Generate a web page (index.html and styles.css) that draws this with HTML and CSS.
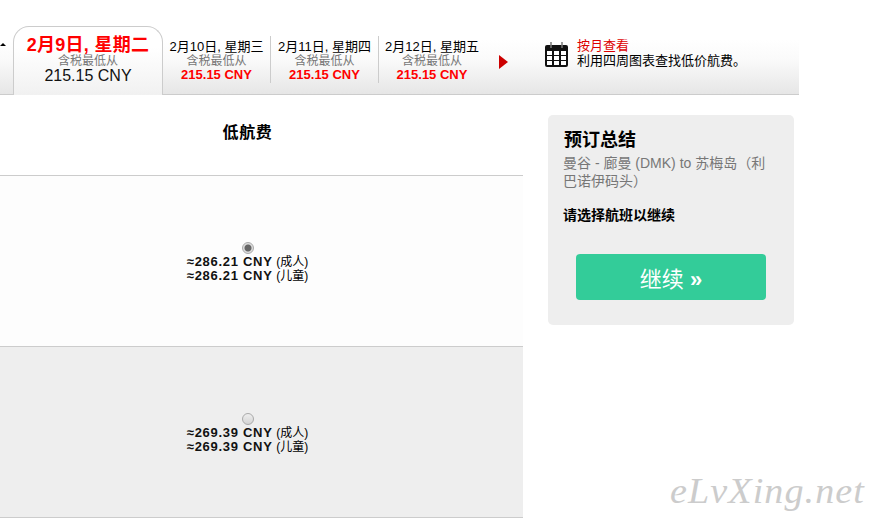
FILE: index.html
```html
<!DOCTYPE html>
<html lang="zh-CN">

<head>
  <meta charset="UTF-8" />
  <title>低航费</title>
  <link rel="stylesheet" href="styles.css">
</head>

<body>
  <div class="datebar">
    <span class="prev"></span>
    <div class="day active">
      <div class="date">2月9日, 星期二</div>
      <div class="from">含税最低从</div>
      <div class="price">215.15 CNY</div>
    </div>
    <div class="day">
      <div class="date">2月10日, 星期三</div>
      <div class="from">含税最低从</div>
      <div class="price">215.15 CNY</div>
    </div>
    <div class="day">
      <div class="date">2月11日, 星期四</div>
      <div class="from">含税最低从</div>
      <div class="price">215.15 CNY</div>
    </div>
    <div class="day last">
      <div class="date">2月12日, 星期五</div>
      <div class="from">含税最低从</div>
      <div class="price">215.15 CNY</div>
    </div>
    <span class="next"></span>
    <svg class="calendar" width="23" height="25" viewBox="0 0 23 25">
      <path d="M2 3h19a2 2 0 0 1 2 2v18a2 2 0 0 1-2 2H2a2 2 0 0 1-2-2V5a2 2 0 0 1 2-2z" fill="#111" />
      <rect x="2" y="9" width="5" height="4" fill="#fff" />
      <rect x="9" y="9" width="5" height="4" fill="#fff" />
      <rect x="16" y="9" width="5" height="4" fill="#fff" />
      <rect x="2" y="14" width="5" height="4" fill="#fff" />
      <rect x="9" y="14" width="5" height="4" fill="#fff" />
      <rect x="16" y="14" width="5" height="4" fill="#fff" />
      <rect x="2" y="19" width="5" height="4" fill="#fff" />
      <rect x="9" y="19" width="5" height="4" fill="#fff" />
      <rect x="16" y="19" width="5" height="4" fill="#fff" />
      <path d="M6 0v6M17 0v6" stroke="#777" stroke-width="1.5" />
    </svg>
    <div class="monthly">
      <div class="monthly-title">按月查看</div>
      <div>利用四周图表查找低价航费。</div>
    </div>
  </div>

  <div class="main">
    <div class="fares">
      <div class="fares-head">低航费</div>
      <div class="fare">
        <input class="radio" type="radio" name="fare" checked>
        <div class="line"><b>≈286.21 CNY</b> <small>(成人)</small></div>
        <div class="line"><b>≈286.21 CNY</b> <small>(儿童)</small></div>
      </div>
      <div class="fare grey">
        <input class="radio" type="radio" name="fare">
        <div class="line"><b>≈269.39 CNY</b> <small>(成人)</small></div>
        <div class="line"><b>≈269.39 CNY</b> <small>(儿童)</small></div>
      </div>
    </div>

    <div class="summary">
      <h2>预订总结</h2>
      <p class="route">曼谷 - 廊曼 (DMK) to 苏梅岛（利巴诺伊码头）</p>
      <p class="hint">请选择航班以继续</p>
      <button class="continue">继续 <b>»</b></button>
    </div>
  </div>

  <div class="watermark">eLvXing.net</div>
</body>

</html>
```

FILE: styles.css
```css
* {
  box-sizing: border-box;
  margin: 0;
  padding: 0;
}

body {
  background-color: #fff;
  color: #000;
  font-family: "Liberation Sans", "Noto Sans CJK SC", sans-serif;
  font-size: 12px;
  width: 875px;
  height: 522px;
  overflow: hidden;
  position: relative;
}

.datebar {
  display: flex;
  align-items: flex-end;
  width: 799px;
  height: 95px;
  border-bottom: 1px solid #ccc;
  background: linear-gradient(#fff 40px, #fafafa 60px, #e6e6e6 94px);
}

.prev {
  align-self: flex-start;
  width: 0;
  height: 0;
  margin: 43px 7px 0 0;
  border-style: solid;
  border-width: 0 3px 3px 3px;
  border-color: transparent transparent #000 transparent;
}

.day {
  width: 108px;
  height: 47px;
  margin-bottom: 11px;
  padding-top: 2px;
  border-right: 1px solid #ccc;
  text-align: center;
}

.day.last {
  width: 106px;
  border-right: none;
}

.date {
  font-size: 13px;
  line-height: 17px;
  white-space: nowrap;
}

.from {
  color: #777;
  font-size: 12px;
  line-height: 13px;
}

.price {
  color: #f00;
  font-size: 13px;
  font-weight: bold;
  line-height: 14px;
}

.day.active {
  width: 150px;
  height: 69px;
  margin: 0 0 -1px 0;
  padding-top: 9px;
  border: 1px solid #ccc;
  border-bottom: none;
  border-radius: 16px 16px 0 0;
  background: linear-gradient(#fff 30%, #f1f1f1 100%);
}

.day.active .date {
  margin-bottom: 1px;
  color: #f00;
  font-size: 18px;
  font-weight: bold;
  line-height: 18px;
  letter-spacing: 0.3px;
}

.day.active .price {
  color: #111;
  font-size: 16px;
  font-weight: normal;
  line-height: 16px;
}

.next {
  align-self: flex-start;
  width: 0;
  height: 0;
  margin: 55px 37px 0 14px;
  border-style: solid;
  border-width: 7px 0 7px 9px;
  border-color: transparent transparent transparent #c00;
}

.calendar {
  align-self: flex-start;
  margin-top: 42px;
}

.monthly {
  align-self: flex-start;
  margin: 38px 0 0 9px;
  font-size: 13px;
  line-height: 15px;
  white-space: nowrap;
}

.monthly-title {
  color: #d00;
}

.main {
  display: flex;
  align-items: flex-start;
}

.fares {
  width: 523px;
}

.fares-head {
  height: 81px;
  padding: 27px 28px 0 0;
  border-bottom: 1px solid #ccc;
  text-align: center;
  font-size: 16px;
  font-weight: bold;
  line-height: 22px;
  letter-spacing: 0.7px;
}

.fare {
  display: flex;
  flex-direction: column;
  align-items: center;
  justify-content: center;
  height: 171px;
  padding: 3px 28px 0 0;
  border-bottom: 1px solid #ccc;
  background-color: #fdfdfd;
}

.fare.grey {
  background-color: #eee;
}

.radio {
  appearance: none;
  display: block;
  width: 12px;
  height: 12px;
  margin-bottom: 1px;
  border: 1px solid #aaa;
  border-radius: 50%;
  background: linear-gradient(#eee, #d4d4d4);
}

.radio:checked {
  background: radial-gradient(circle, #666 3px, #ddd 4px);
}

.line {
  font-size: 13px;
  line-height: 14px;
  white-space: nowrap;
}

.line b {
  color: #111;
  letter-spacing: 0.7px;
}

.line small {
  font-size: 12px;
}

.summary {
  width: 246px;
  height: 210px;
  margin: 20px 0 0 25px;
  padding: 15px 16px;
  border-radius: 5px;
  background-color: #eee;
}

.summary h2 {
  font-size: 18px;
  font-weight: bold;
  line-height: 21px;
}

.route {
  margin: 3px 0 0 -1px;
  color: #777;
  font-size: 14px;
  line-height: 18px;
}

.hint {
  margin: 17px 0 0 -1px;
  font-size: 14px;
  font-weight: bold;
  line-height: 16px;
}

.continue {
  display: block;
  width: 190px;
  height: 46px;
  margin: 31px 0 0 12px;
  border: none;
  border-radius: 4px;
  background-color: #33cc99;
  color: #fff;
  font-family: inherit;
  font-size: 22px;
  font-weight: normal;
}

/* sits over the page, bottom right corner */
.watermark {
  position: absolute;
  left: 670px;
  top: 470px;
  color: #ccc;
  font-family: "Liberation Serif", serif;
  font-style: italic;
  font-size: 36px;
  letter-spacing: 1px;
  transform: scaleX(1.06);
  transform-origin: left;
  white-space: nowrap;
}
```
